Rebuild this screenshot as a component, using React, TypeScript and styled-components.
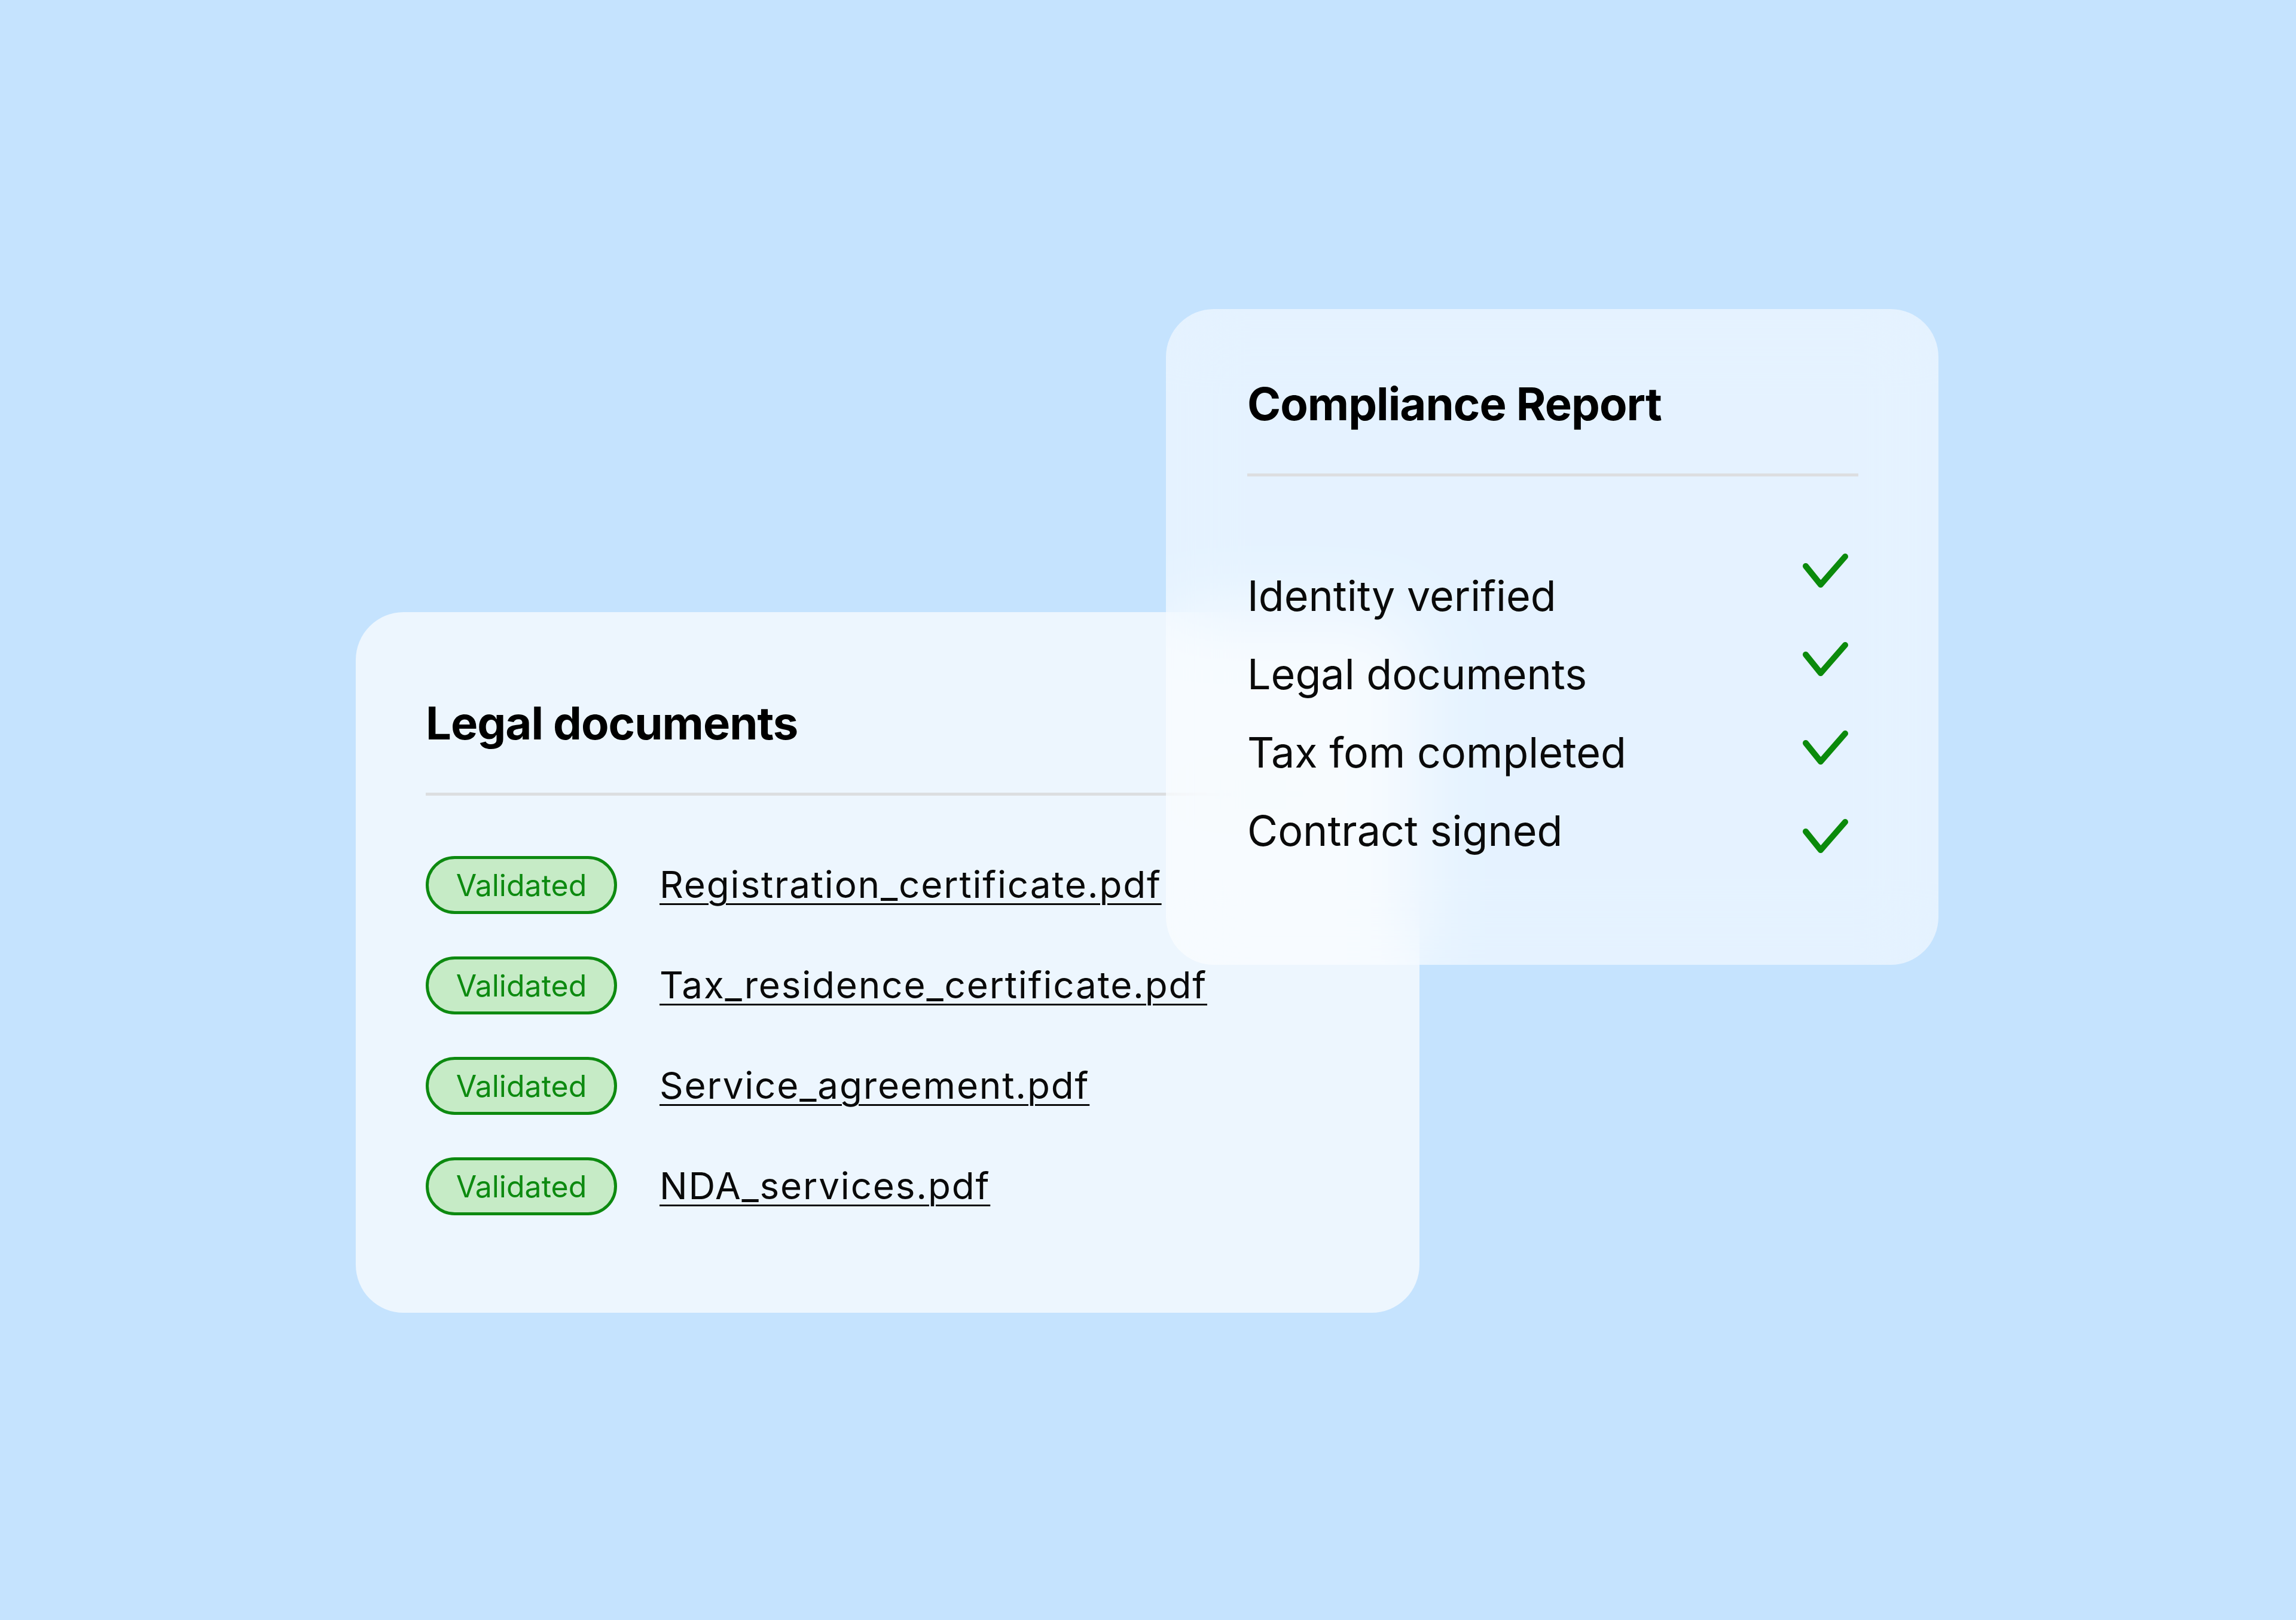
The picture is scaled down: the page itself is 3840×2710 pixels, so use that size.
import styled, { createGlobalStyle } from "styled-components";

const GlobalStyle = createGlobalStyle`
  html, body {
    margin: 0;
    padding: 0;
    background: #c5e3fe;
  }
  body {
    font-family: Inter, "Liberation Sans", sans-serif;
    color: #0a0a0a;
  }
`;

const Stage = styled.div`
  width: 3840px;
  height: 2710px;
  box-sizing: border-box;
  padding: 517px 0 0 595px;
  display: grid;
  grid-template-columns: 1355px 424px 868px;
  grid-template-rows: 507px 590px 582px;
  align-content: start;
`;

const DocsCard = styled.section`
  grid-column: 1 / 3;
  grid-row: 2 / 4;
  box-sizing: border-box;
  background: #edf6fe;
  border-radius: 80px;
  padding: 140px 116px 0 117px;
  display: flex;
  flex-direction: column;
`;

const ReportCard = styled.section`
  grid-column: 2 / 4;
  grid-row: 1 / 3;
  z-index: 1;
  box-sizing: border-box;
  background: rgba(255, 255, 255, 0.55);
  backdrop-filter: blur(60px);
  -webkit-backdrop-filter: blur(60px);
  border-radius: 80px;
  padding: 113px 134px 0 136px;
  display: flex;
  flex-direction: column;
`;

const CardTitle = styled.h2`
  margin: 0;
  font-size: 76px;
  line-height: 1.2;
  font-weight: 700;
  letter-spacing: -1px;
  color: #000;
`;

const Divider = styled.hr`
  margin: 71px 0 0;
  border: none;
  height: 5px;
  background: #dcdee0;
`;

const DocList = styled.ul`
  list-style: none;
  margin: 101px 0 0;
  padding: 0;
  display: flex;
  flex-direction: column;
  gap: 71px;
`;

const DocRow = styled.li`
  display: flex;
  align-items: center;
  gap: 71px;
`;

const Badge = styled.span`
  box-sizing: border-box;
  width: 320px;
  height: 97px;
  border: 5px solid #0d8a10;
  border-radius: 50px;
  background: #c6ebc6;
  color: #0d8a10;
  font-size: 50px;
  display: flex;
  align-items: center;
  justify-content: center;
`;

const FileLink = styled.a`
  font-size: 62px;
  line-height: 1.2;
  letter-spacing: 1.8px;
  color: #0a0a0a;
  text-decoration: underline;
  text-decoration-thickness: 3px;
  text-underline-offset: 9px;
`;

const CheckList = styled.div`
  margin-top: 129px;
  display: flex;
  justify-content: space-between;
  align-items: flex-start;
`;

const Labels = styled.ul`
  list-style: none;
  margin: 0;
  padding: 29px 0 0;
  display: flex;
  flex-direction: column;
  gap: 47px;
`;

const Label = styled.li`
  font-size: 70px;
  line-height: 1.2;
  color: #0a0a0a;
`;

const Checks = styled.div`
  display: flex;
  flex-direction: column;
  gap: 91px;
  padding-right: 17px;
`;

const CheckMark = () => (
  <svg width="76" height="57" viewBox="0 0 76 57" fill="none">
    <polyline
      points="5,21 30,52 71,5"
      stroke="#0b8a0b"
      strokeWidth="10"
      strokeLinecap="round"
      strokeLinejoin="round"
    />
  </svg>
);

const files = [
  "Registration_certificate.pdf",
  "Tax_residence_certificate.pdf",
  "Service_agreement.pdf",
  "NDA_services.pdf",
];

const checks = [
  "Identity verified",
  "Legal documents",
  "Tax fom completed",
  "Contract signed",
];

export default function App() {
  return (
    <>
      <GlobalStyle />
      <Stage>
        <DocsCard>
          <CardTitle>Legal documents</CardTitle>
          <Divider />
          <DocList>
            {files.map((f) => (
              <DocRow key={f}>
                <Badge>Validated</Badge>
                <FileLink>{f}</FileLink>
              </DocRow>
            ))}
          </DocList>
        </DocsCard>
        <ReportCard>
          <CardTitle>Compliance Report</CardTitle>
          <Divider />
          <CheckList>
            <Labels>
              {checks.map((c) => (
                <Label key={c}>{c}</Label>
              ))}
            </Labels>
            <Checks>
              {checks.map((c) => (
                <CheckMark key={c} />
              ))}
            </Checks>
          </CheckList>
        </ReportCard>
      </Stage>
    </>
  );
}
